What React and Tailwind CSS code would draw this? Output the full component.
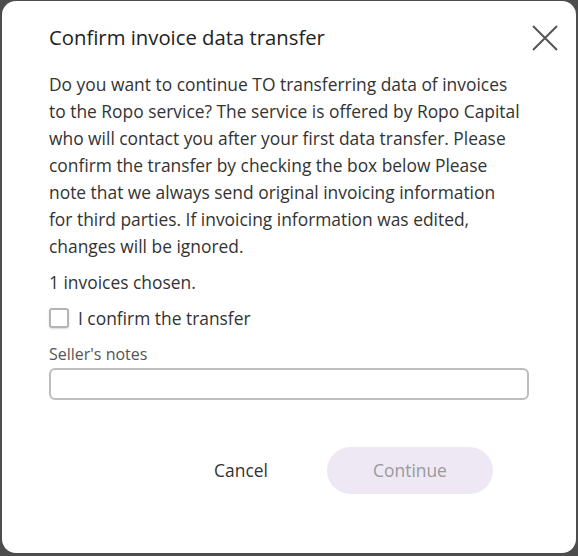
export default function App() {
  const font = { fontFamily: '"Open Sans", "Noto Sans", sans-serif' };
  return (
    <div className="w-[578px] h-[556px] bg-[#4d4d4d] pt-[1px] pl-[2px] overflow-hidden" style={font}>
      <div className="relative w-[574px] h-[552px] rounded-[14px] bg-white pl-[47px] pr-[47px] pt-[22px] flex flex-col">
        <h2 className="h-[28px] leading-[28px] text-[20.3px] font-medium text-[#222] whitespace-nowrap">
          Confirm invoice data transfer
        </h2>
        <button className="absolute left-[529px] top-[23px] w-[28px] h-[28px] flex items-center justify-center">
          <svg width="28" height="28" viewBox="0 0 28 28" fill="none" stroke="#555" strokeWidth="2">
            <path d="M2 2 L26 26 M26 2 L2 26" />
          </svg>
        </button>
        <p className="mt-[20px] text-[17.4px] leading-[27px] text-[#333] whitespace-nowrap">
          Do you want to continue TO transferring data of invoices<br />
          to the Ropo service? The service is offered by Ropo Capital<br />
          who will contact you after your first data transfer. Please<br />
          confirm the transfer by checking the box below Please<br />
          note that we always send original invoicing information<br />
          for third parties. If invoicing information was edited,<br />
          changes will be ignored.
        </p>
        <p className="mt-[9px] text-[17.4px] leading-[27px] text-[#333]">1 invoices chosen.</p>
        <label className="mt-[9px] h-[26px] flex items-center gap-[9px]">
          <span className="w-[20px] h-[20px] rounded-[3px] border-2 border-[#b5b5b5] bg-white shadow-[0_1px_2px_rgba(0,0,0,0.15)]" />
          <span className="text-[17.4px] leading-[26px] text-[#333]">I confirm the transfer</span>
        </label>
        <div className="mt-[13px] h-[20px] leading-[20px] text-[16px] text-[#555]">Seller's notes</div>
        <div className="mt-[4px] h-[32px] w-[480px] rounded-[6px] border-2 border-[#bdbdbd] bg-white" />
        <div className="mt-[47px] flex items-center pl-[109px]">
          <button className="w-[166px] h-[47px] text-[17.4px] text-[#333] rounded-full">Cancel</button>
          <button className="ml-[3px] w-[166px] h-[47px] rounded-full bg-[#eee8f5] text-[17.4px] text-[#9a9a9a]">Continue</button>
        </div>
      </div>
    </div>
  );
}
